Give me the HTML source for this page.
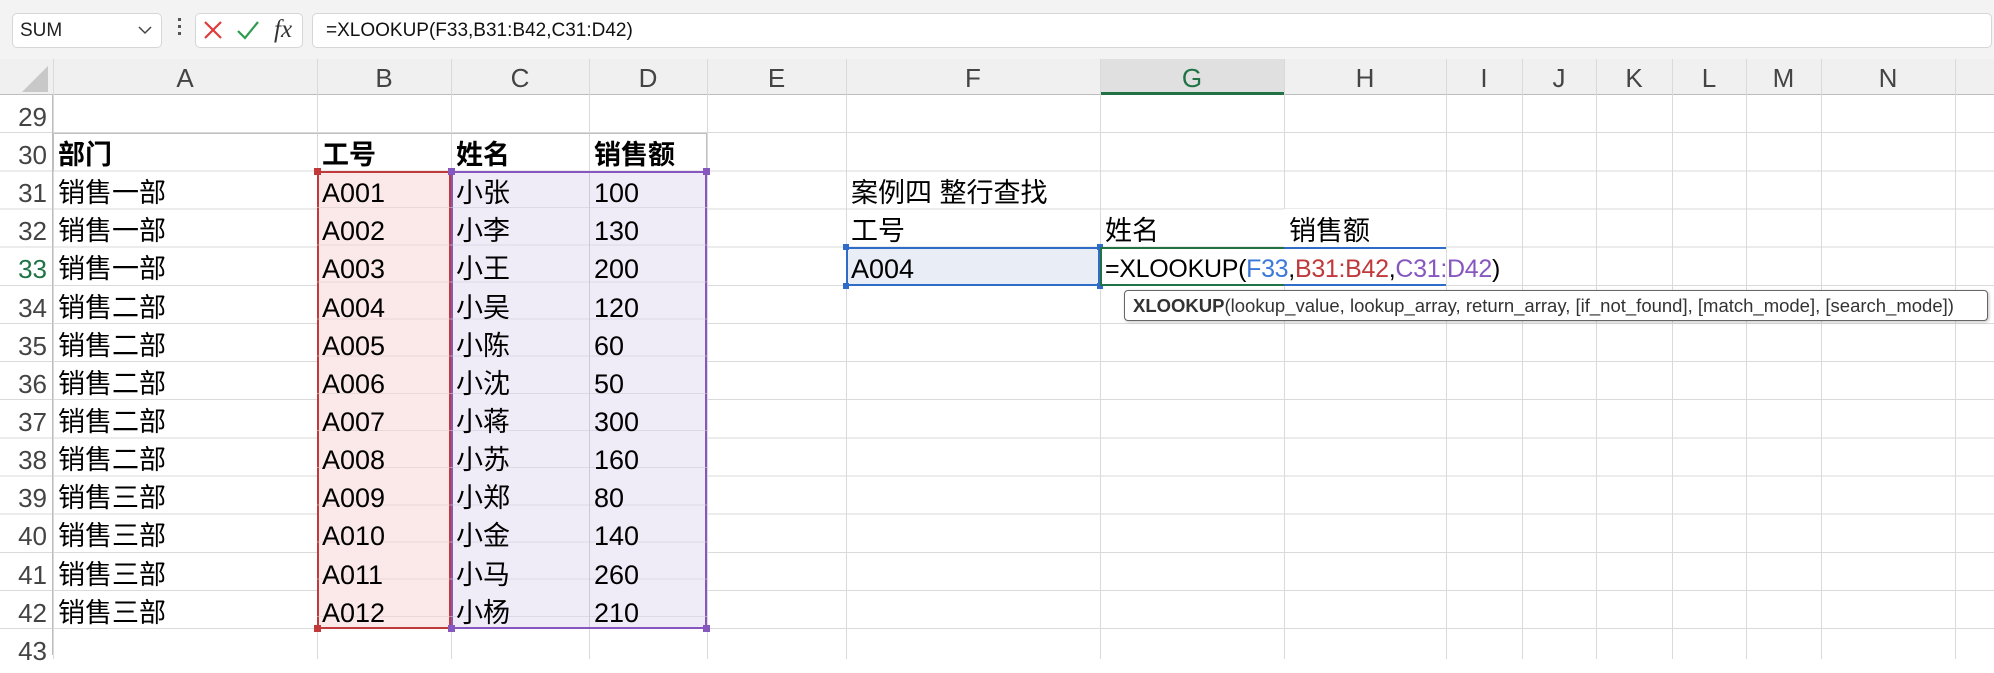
<!DOCTYPE html>
<html><head><meta charset="utf-8"><style>
*{margin:0;padding:0;box-sizing:border-box}
body{width:1994px;height:654px;overflow:hidden;background:#fff;position:relative;font-family:"Liberation Sans","Noto Sans CJK SC",sans-serif}
.a{position:absolute}
.tb{left:0;top:0;width:1994px;height:59px;background:#f3f3f3}
.box{background:#fff;border:1px solid #d6d6d6;border-radius:5px}
.hdr{top:59px;height:36px;background:#f0f0f0;border-bottom:1px solid #bdbdbd}
.ch{top:59px;height:36px;line-height:38px;text-align:center;font-size:26px;color:#444}
.vl{top:59px;width:1px;height:600px;background:#dadada}
.rh{left:0;width:53px;text-align:right;padding-right:6px;font-size:26px;color:#444;height:38px;line-height:44px}
.c{font-size:27px;height:38px;line-height:44px;padding-left:5px;white-space:nowrap;color:#000}
.b{font-weight:bold}
</style></head><body>
<div class="a tb"></div>
<div class="a box" style="left:12px;top:13px;width:150px;height:35px"></div>
<div class="a" style="left:20px;top:13px;line-height:35px;font-size:19px;color:#222">SUM</div>
<svg class="a" style="left:138px;top:25px" width="14" height="10"><path d="M1 2 L7 8 L13 2" stroke="#444" stroke-width="1.5" fill="none"/></svg>
<div class="a" style="left:178px;top:18px;width:3px;height:3px;background:#555;box-shadow:0 7px 0 #555,0 14px 0 #555"></div>
<div class="a box" style="left:195px;top:13px;width:108px;height:35px"></div>
<svg class="a" style="left:202px;top:19px" width="22" height="22"><path d="M3 3 L19 19 M19 3 L3 19" stroke="#e03a3a" stroke-width="2.2" fill="none"/></svg>
<svg class="a" style="left:236px;top:19px" width="24" height="22"><path d="M2 12 L9 19 L22 3" stroke="#2e9b4f" stroke-width="2.2" fill="none"/></svg>
<div class="a" style="left:274px;top:17px;line-height:26px;font-family:'Liberation Serif',serif;font-style:italic;font-size:25px;color:#333">fx</div>
<div class="a box" style="left:312px;top:13px;width:1680px;height:35px"></div>
<div class="a" style="left:326px;top:13px;line-height:35px;font-size:19px;color:#111">=XLOOKUP(F33,B31:B42,C31:D42)</div>

<div class="a hdr" style="left:0;width:1994px"></div>
<div class="a" style="left:1100px;top:59px;width:184px;height:36px;background:#e0e0e0;border-bottom:3px solid #217346"></div>
<svg class="a" style="left:18px;top:66px" width="30" height="26"><path d="M30 0 L30 26 L4 26 Z" fill="#c8c8c8"/></svg>
<div class="a vl" style="left:53px"></div><div class="a vl" style="left:317px"></div><div class="a vl" style="left:451px"></div><div class="a vl" style="left:589px"></div><div class="a vl" style="left:707px"></div><div class="a vl" style="left:846px"></div><div class="a vl" style="left:1100px"></div><div class="a vl" style="left:1284px"></div><div class="a vl" style="left:1446px"></div><div class="a vl" style="left:1522px"></div><div class="a vl" style="left:1596px"></div><div class="a vl" style="left:1672px"></div><div class="a vl" style="left:1746px"></div><div class="a vl" style="left:1821px"></div><div class="a vl" style="left:1955px"></div>
<div class="a ch" style="left:53px;width:264px">A</div><div class="a ch" style="left:317px;width:134px">B</div><div class="a ch" style="left:451px;width:138px">C</div><div class="a ch" style="left:589px;width:118px">D</div><div class="a ch" style="left:707px;width:139px">E</div><div class="a ch" style="left:846px;width:254px">F</div><div class="a ch" style="left:1100px;width:184px;color:#217346">G</div><div class="a ch" style="left:1284px;width:162px">H</div><div class="a ch" style="left:1446px;width:76px">I</div><div class="a ch" style="left:1522px;width:74px">J</div><div class="a ch" style="left:1596px;width:76px">K</div><div class="a ch" style="left:1672px;width:74px">L</div><div class="a ch" style="left:1746px;width:75px">M</div><div class="a ch" style="left:1821px;width:134px">N</div>

<div class="a" style="left:0;top:95px;width:1994px;height:560px;background:repeating-linear-gradient(to bottom,transparent 0,transparent 37.15px,#dadada 37.15px,#dadada 38.15px)"></div>
<div class="a" style="left:52px;top:95px;width:1px;height:560px;background:#bdbdbd"></div>
<div class="a" style="left:53px;top:133px;width:654px;height:1px;background:#c0c0c0"></div>
<div class="a" style="left:53px;top:133px;width:654px;height:38px;border-left:1px solid #c0c0c0;border-right:1px solid #c0c0c0"></div>

<div class="a" style="left:317px;top:171px;width:134px;height:458px;background:#fbe9e9;border:2px solid #c0393b"></div>
<div class="a" style="left:451px;top:171px;width:256px;height:458px;background:#efebf7;border:2px solid #8757c0"></div>
<div class="a" style="left:451px;top:171px;width:256px;height:458px;background:repeating-linear-gradient(to bottom,transparent 0,transparent 36.15px,#cfcfd8 36.15px,#cfcfd8 37.15px) ;opacity:.6"></div>
<div class="a" style="left:589px;top:173px;width:1px;height:454px;background:#cfc8dd"></div>
<div class="a" style="left:317px;top:171px;width:134px;height:458px;background:repeating-linear-gradient(to bottom,transparent 0,transparent 36.15px,#ddcccc 36.15px,#ddcccc 37.15px);opacity:.6"></div>
<div class="a" style="left:314px;top:168px;width:7px;height:7px;background:#c0393b"></div><div class="a" style="left:314px;top:625px;width:7px;height:7px;background:#c0393b"></div>
<div class="a" style="left:448px;top:168px;width:7px;height:7px;background:#8757c0"></div><div class="a" style="left:703px;top:168px;width:7px;height:7px;background:#8757c0"></div><div class="a" style="left:448px;top:625px;width:7px;height:7px;background:#8757c0"></div><div class="a" style="left:703px;top:625px;width:7px;height:7px;background:#8757c0"></div>

<div class="a" style="left:846px;top:247px;width:254px;height:39px;background:#e8edf6;border:2px solid #2f6cc7"></div>
<div class="a" style="left:843px;top:244px;width:6px;height:6px;background:#2f6cc7"></div><div class="a" style="left:1097px;top:244px;width:6px;height:6px;background:#2f6cc7"></div><div class="a" style="left:843px;top:283px;width:6px;height:6px;background:#2f6cc7"></div><div class="a" style="left:1097px;top:283px;width:6px;height:6px;background:#2f6cc7"></div>
<div class="a" style="left:1100px;top:247px;width:184px;height:39px;background:#fff;border:2px solid #217346;border-right:none"></div>
<div class="a" style="left:1284px;top:247px;width:162px;height:39px;background:#fff;border-top:2px solid #2f6cc7;border-bottom:2px solid #2f6cc7"></div>
<div class="a" style="left:1284px;top:209px;width:162px;height:38px;background:#fff"></div>
<div class="a c" style="left:1284px;top:209px">销售额</div>

<div class="a rh" style="top:95px">29</div><div class="a rh" style="top:133px">30</div><div class="a rh" style="top:171px">31</div><div class="a rh" style="top:209px">32</div><div class="a rh" style="top:247px;color:#217346">33</div><div class="a rh" style="top:286px">34</div><div class="a rh" style="top:324px">35</div><div class="a rh" style="top:362px">36</div><div class="a rh" style="top:400px">37</div><div class="a rh" style="top:438px">38</div><div class="a rh" style="top:476px">39</div><div class="a rh" style="top:514px">40</div><div class="a rh" style="top:553px">41</div><div class="a rh" style="top:591px">42</div><div class="a rh" style="top:629px">43</div>

<div class="a c b" style="left:53px;top:133px">部门</div><div class="a c b" style="left:317px;top:133px">工号</div><div class="a c b" style="left:451px;top:133px">姓名</div><div class="a c b" style="left:589px;top:133px">销售额</div>
<div class="a c" style="left:53px;top:171px">销售一部</div><div class="a c" style="left:317px;top:171px">A001</div><div class="a c" style="left:451px;top:171px">小张</div><div class="a c" style="left:589px;top:171px">100</div>
<div class="a c" style="left:53px;top:209px">销售一部</div><div class="a c" style="left:317px;top:209px">A002</div><div class="a c" style="left:451px;top:209px">小李</div><div class="a c" style="left:589px;top:209px">130</div>
<div class="a c" style="left:53px;top:247px">销售一部</div><div class="a c" style="left:317px;top:247px">A003</div><div class="a c" style="left:451px;top:247px">小王</div><div class="a c" style="left:589px;top:247px">200</div>
<div class="a c" style="left:53px;top:286px">销售二部</div><div class="a c" style="left:317px;top:286px">A004</div><div class="a c" style="left:451px;top:286px">小吴</div><div class="a c" style="left:589px;top:286px">120</div>
<div class="a c" style="left:53px;top:324px">销售二部</div><div class="a c" style="left:317px;top:324px">A005</div><div class="a c" style="left:451px;top:324px">小陈</div><div class="a c" style="left:589px;top:324px">60</div>
<div class="a c" style="left:53px;top:362px">销售二部</div><div class="a c" style="left:317px;top:362px">A006</div><div class="a c" style="left:451px;top:362px">小沈</div><div class="a c" style="left:589px;top:362px">50</div>
<div class="a c" style="left:53px;top:400px">销售二部</div><div class="a c" style="left:317px;top:400px">A007</div><div class="a c" style="left:451px;top:400px">小蒋</div><div class="a c" style="left:589px;top:400px">300</div>
<div class="a c" style="left:53px;top:438px">销售二部</div><div class="a c" style="left:317px;top:438px">A008</div><div class="a c" style="left:451px;top:438px">小苏</div><div class="a c" style="left:589px;top:438px">160</div>
<div class="a c" style="left:53px;top:476px">销售三部</div><div class="a c" style="left:317px;top:476px">A009</div><div class="a c" style="left:451px;top:476px">小郑</div><div class="a c" style="left:589px;top:476px">80</div>
<div class="a c" style="left:53px;top:514px">销售三部</div><div class="a c" style="left:317px;top:514px">A010</div><div class="a c" style="left:451px;top:514px">小金</div><div class="a c" style="left:589px;top:514px">140</div>
<div class="a c" style="left:53px;top:553px">销售三部</div><div class="a c" style="left:317px;top:553px">A011</div><div class="a c" style="left:451px;top:553px">小马</div><div class="a c" style="left:589px;top:553px">260</div>
<div class="a c" style="left:53px;top:591px">销售三部</div><div class="a c" style="left:317px;top:591px">A012</div><div class="a c" style="left:451px;top:591px">小杨</div><div class="a c" style="left:589px;top:591px">210</div>

<div class="a c" style="left:846px;top:171px">案例四 整行查找</div>
<div class="a c" style="left:846px;top:209px">工号</div><div class="a c" style="left:1100px;top:209px">姓名</div>
<div class="a c" style="left:846px;top:247px">A004</div>
<div class="a c" style="left:1100px;top:247px;font-size:25px;letter-spacing:-0.3px">=XLOOKUP(<span style="color:#3b78d8">F33</span>,<span style="color:#c0393b">B31:B42</span>,<span style="color:#8757c0">C31:D42</span>)</div>

<div class="a" style="left:1124px;top:290px;width:864px;height:31px;background:#fff;border:1.5px solid #666;border-radius:4px;box-shadow:1px 1px 3px rgba(0,0,0,.25);font-size:18.5px;line-height:29px;padding-left:8px;white-space:nowrap;color:#333"><b>XLOOKUP</b>(lookup_value, lookup_array, return_array, [if_not_found], [match_mode], [search_mode])</div>
</body></html>
